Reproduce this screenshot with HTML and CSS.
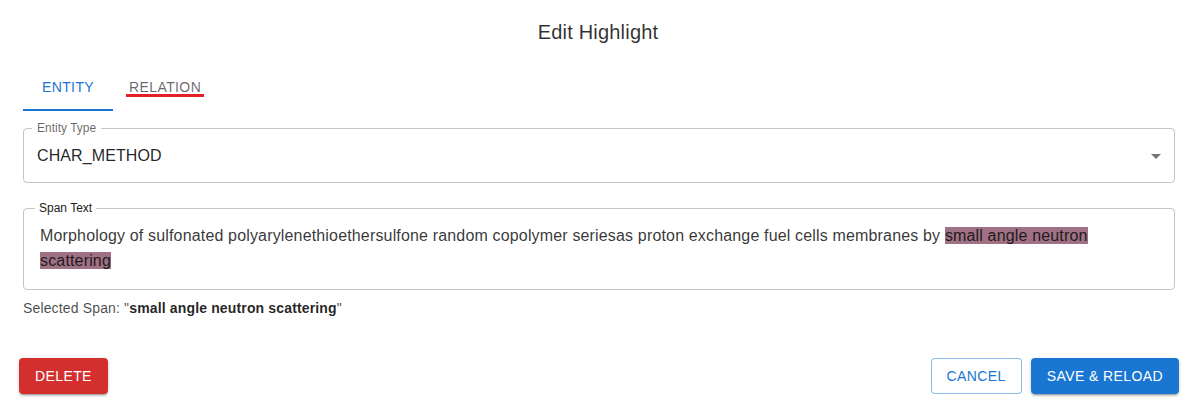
FILE: index.html
```html
<!DOCTYPE html>
<html lang="en">
<head>
<meta charset="utf-8">
<title>Edit Highlight</title>
<link rel="stylesheet" href="styles.css">
</head>
<body>
<div class="dialog">
  <h2 class="title">Edit Highlight</h2>
  <div class="tabs">
    <button class="tab tab-active">ENTITY</button>
    <button class="tab"><span class="flagged">RELATION</span></button>
  </div>
  <div class="content">
    <fieldset class="field field-select">
      <legend class="legend legend-muted">Entity Type</legend>
      <div class="select-row">
        <span class="select-value">CHAR_METHOD</span>
        <svg class="select-arrow" viewBox="0 0 24 24" width="24" height="24"><path d="M7 10l5 5 5-5z"/></svg>
      </div>
    </fieldset>
    <fieldset class="field field-span">
      <legend class="legend legend-dark">Span Text</legend>
      <p class="span-text">Morphology of sulfonated polyarylenethioethersulfone random copolymer seriesas proton exchange fuel cells membranes by <mark class="hl">small angle neutron scattering</mark></p>
    </fieldset>
    <p class="selected">Selected Span: "<strong>small angle neutron scattering</strong>"</p>
  </div>
  <div class="actions">
    <button class="btn btn-delete">DELETE</button>
    <div class="actions-right">
      <button class="btn btn-cancel">CANCEL</button>
      <button class="btn btn-save">SAVE &amp; RELOAD</button>
    </div>
  </div>
</div>
</body>
</html>
```

FILE: styles.css
```css
* { box-sizing: border-box; }
html, body {
  margin: 0;
  padding: 0;
  background: #fff;
}
body {
  font-family: "Liberation Sans", Arial, sans-serif;
  color: rgba(0,0,0,0.87);
  width: 1196px;
  height: 409px;
  overflow: hidden;
}
.dialog {
  display: flex;
  flex-direction: column;
}
.title {
  margin: 0;
  padding-top: 16px;
  font-size: 20px;
  line-height: 32px;
  font-weight: 400;
  letter-spacing: 0.2px;
  text-align: center;
  color: rgba(0,0,0,0.82);
}
.tabs {
  margin-top: 15px;
  padding-left: 23px;
  display: flex;
  height: 48px;
}
.tab {
  font-family: inherit;
  background: none;
  border: 0;
  margin: 0;
  padding: 12px 16px 10px;
  min-width: 90px;
  height: 48px;
  font-size: 14px;
  letter-spacing: 0.4px;
  line-height: 20px;
  color: rgba(0,0,0,0.6);
  border-bottom: 2px solid transparent;
  text-align: center;
}
.tab-active {
  color: #1976d2;
  border-bottom-color: #1976d2;
}
.flagged {
  position: relative;
  display: inline-block;
  line-height: 20px;
}
.flagged::after {
  content: "";
  position: absolute;
  left: -3px;
  right: -3px;
  bottom: 0;
  height: 3px;
  background: #e3202a;
}
.content {
  padding: 0 21px 0 23px;
  display: flex;
  flex-direction: column;
}
.field {
  margin: 0;
  border: 1px solid #c4c4c4;
  border-radius: 4px;
  min-width: 0;
}
.legend {
  font-size: 12px;
  line-height: 12px;
}
.legend-muted {
  color: rgba(0,0,0,0.6);
  margin-left: -5px;
  padding: 0 5px;
}
.legend-dark {
  color: #222;
  margin-left: -5px;
  padding: 0 4px;
}
.field-select {
  margin-top: 11px;
  padding: 10px 6px 14px 13px;
}
.select-row {
  display: flex;
  align-items: center;
  justify-content: space-between;
  height: 24px;
}
.select-value {
  font-size: 16px;
  line-height: 24px;
  letter-spacing: 0.1px;
}
.select-arrow {
  display: block;
  fill: #757575;
}
.field-span {
  margin-top: 19px;
  padding: 10px 20px 16px 16px;
}
.span-text {
  margin: 0;
  font-size: 16px;
  line-height: 24.5px;
  letter-spacing: 0.16px;
  color: rgba(0,0,0,0.8);
}
.hl {
  background: #9e7284;
  color: inherit;
}
.selected {
  margin: 8px 0 0;
  font-size: 14px;
  line-height: 20px;
  letter-spacing: 0.15px;
  color: rgba(0,0,0,0.72);
}
.selected strong {
  color: rgba(0,0,0,0.87);
  font-weight: 700;
}
.actions {
  margin-top: 40px;
  padding: 0 17px 0 19px;
  display: flex;
  justify-content: space-between;
  align-items: center;
}
.actions-right {
  display: flex;
  gap: 9px;
}
.btn {
  font-family: inherit;
  font-size: 14px;
  letter-spacing: 0.4px;
  line-height: 24px;
  height: 36px;
  padding: 6px 16px;
  border: 0;
  border-radius: 4px;
  margin: 0;
  cursor: pointer;
}
.btn-delete {
  background: #d32f2f;
  color: #fff;
  box-shadow: 0 3px 1px -2px rgba(0,0,0,0.2), 0 2px 2px 0 rgba(0,0,0,0.14), 0 1px 5px 0 rgba(0,0,0,0.12);
}
.btn-save {
  background: #1976d2;
  color: #fff;
  box-shadow: 0 3px 1px -2px rgba(0,0,0,0.2), 0 2px 2px 0 rgba(0,0,0,0.14), 0 1px 5px 0 rgba(0,0,0,0.12);
}
.btn-cancel {
  background: #fff;
  color: #1976d2;
  border: 1px solid rgba(25,118,210,0.5);
  padding: 5px 15px;
}
```
